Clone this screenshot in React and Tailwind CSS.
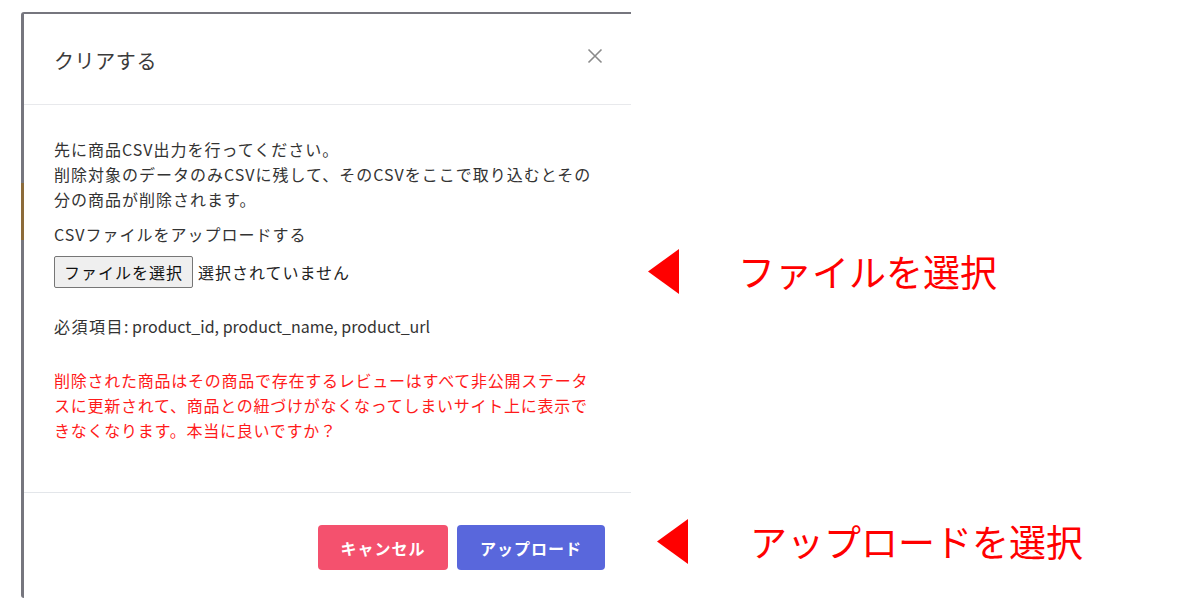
import React from 'react';

const jp = { fontFamily: '"Noto Sans CJK JP", "Noto Sans", sans-serif' };

const Arrow = ({ className }) => (
  <svg width="31" height="45" viewBox="0 0 31 45" className={className}>
    <polygon points="31,0 31,45 0,22.5" fill="#ff0000" />
  </svg>
);

const ClearModal = () => {
  return (
    <div className="flex h-[586px] w-[610px]">
      <div className="w-[3px] rounded-tl-[5px] rounded-bl-[5px] bg-[linear-gradient(to_bottom,#76767e_171px,#8c6b3a_171px,#8c6b3a_228px,#76767e_228px)]" />
      <div className="flex flex-1 flex-col border-t-2 border-[#76767e] bg-white">
        <div className="flex h-[91px] items-center justify-between border-b border-[#e8e9ec] pl-[30px] pr-[28px]">
          <h2 className="pt-[4px] text-[20px] tracking-[0.6px] text-[#3a3a3a]">クリアする</h2>
          <button className="mb-[6px] text-[#8a8a8a]">
            <svg width="16" height="16" viewBox="0 0 16 16">
              <path d="M1.5 1.5L14.5 14.5M14.5 1.5L1.5 14.5" stroke="currentColor" strokeWidth="1.6" />
            </svg>
          </button>
        </div>

        <div className="flex flex-1 flex-col pl-[30px] pr-[10px] pt-[32px] text-[16px] leading-[25px] text-[#333]">
          <p className="tracking-[1px]">
            先に商品CSV出力を行ってください。
            <br />
            削除対象のデータのみCSVに残して、そのCSVをここで取り込むとその
            <br />
            分の商品が削除されます。
          </p>
          <p className="mt-[10px] tracking-[1px]">CSVファイルをアップロードする</p>
          <div className="mt-[9px] flex items-center tracking-[1px]">
            <span className="flex h-[32px] w-[139px] items-center justify-center rounded-[2px] border border-[#767676] bg-[#efefef] text-[#111]">
              ファイルを選択
            </span>
            <span className="ml-[5px] text-[#222]">選択されていません</span>
          </div>
          <p className="mt-[26px]">
            <span className="tracking-[1.5px]">必須項目</span>: product_id, product_name, product_url
          </p>
          <p className="mt-[29px] tracking-[0.75px] text-[#ff1a1a]">
            削除された商品はその商品で存在するレビューはすべて非公開ステータ
            <br />
            スに更新されて、商品との紐づけがなくなってしまいサイト上に表示で
            <br />
            きなくなります。本当に良いですか？
          </p>
        </div>

        <div className="flex justify-end gap-[9px] border-t border-[#e3e6ea] pb-[28px] pr-[26px] pt-[32px]">
          <button className="h-[45px] w-[130px] rounded-[4px] bg-[#f4516e] text-[16px] font-bold tracking-[1px] text-white">
            キャンセル
          </button>
          <button className="h-[45px] w-[148px] rounded-[4px] bg-[#5967dc] text-[16px] font-bold tracking-[1px] text-white">
            アップロード
          </button>
        </div>
      </div>
    </div>
  );
};

const App = () => {
  return (
    <div className="flex h-[612px] w-[1200px] overflow-hidden bg-white" style={jp}>
      <div className="pl-[21px] pt-[12px]">
        <ClearModal />
      </div>
      <div className="flex flex-col text-[37px] leading-[45px] text-[#ff0000]">
        <div className="mt-[249px] flex items-center">
          <Arrow className="ml-[17px]" />
          <span className="ml-[59px]">ファイルを選択</span>
        </div>
        <div className="mt-[225px] flex items-center">
          <Arrow className="ml-[26px]" />
          <span className="ml-[62px]">アップロードを選択</span>
        </div>
      </div>
    </div>
  );
};

export default App;
